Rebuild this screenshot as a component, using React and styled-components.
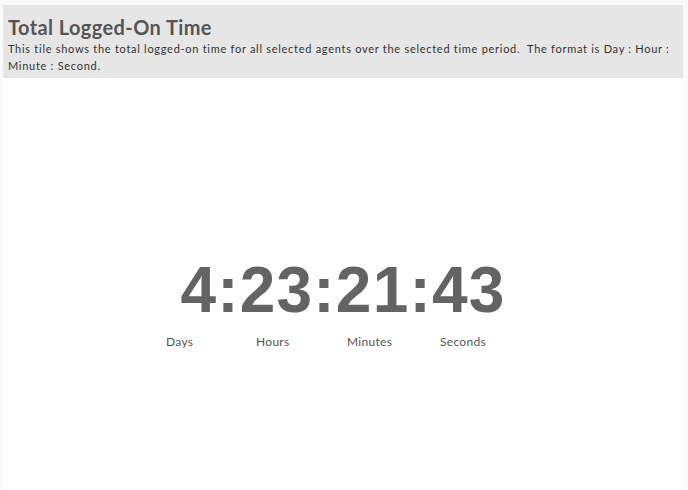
import styled, { createGlobalStyle } from "styled-components";

const GlobalStyle = createGlobalStyle`
  html, body {
    margin: 0;
    padding: 0;
    background: #fafafa;
  }
  #root {
    height: 490px;
  }
`;

const Page = styled.div`
  height: 490px;
  padding: 5px 5px 0 3px;
  box-sizing: border-box;
  display: flex;
  flex-direction: column;
  font-family: Lato, "Open Sans", sans-serif;
`;

const Header = styled.header`
  background: #e6e6e6;
  height: 73px;
  padding: 11px 4px 0 5px;
  box-sizing: border-box;
`;

const Title = styled.h1`
  margin: 0;
  font-size: 20px;
  font-weight: 700;
  line-height: 23px;
  letter-spacing: 0.4px;
  color: #555555;
`;

const Description = styled.p`
  margin: 1px 0 0;
  font-size: 11px;
  line-height: 17px;
  letter-spacing: 0.72px;
  color: #333333;
`;

const Panel = styled.main`
  flex: 1;
  background: #ffffff;
  display: flex;
  flex-direction: column;
  align-items: center;
  padding-top: 177px;
`;

const Clock = styled.div`
  font-family: "Liberation Sans", Arial, sans-serif;
  font-weight: 700;
  font-size: 64px;
  line-height: 70px;
  letter-spacing: 1.2px;
  color: #636363;
`;

const Labels = styled.div`
  display: grid;
  grid-template-columns: 90px 91px 93px 80px;
  margin-top: 9px;
`;

const Label = styled.span`
  font-size: 12px;
  line-height: 16px;
  letter-spacing: 0.3px;
  color: #555555;
`;

const units = ["Days", "Hours", "Minutes", "Seconds"];

export default function App() {
  return (
    <>
      <GlobalStyle />
      <Page>
        <Header>
          <Title>Total Logged-On Time</Title>
          <Description>
            This tile shows the total logged-on time for all selected agents over the selected time period.&nbsp; The format is Day : Hour : Minute : Second.
          </Description>
        </Header>
        <Panel>
          <Clock>4:23:21:43</Clock>
          <Labels>
            {units.map((u) => (
              <Label key={u}>{u}</Label>
            ))}
          </Labels>
        </Panel>
      </Page>
    </>
  );
}
